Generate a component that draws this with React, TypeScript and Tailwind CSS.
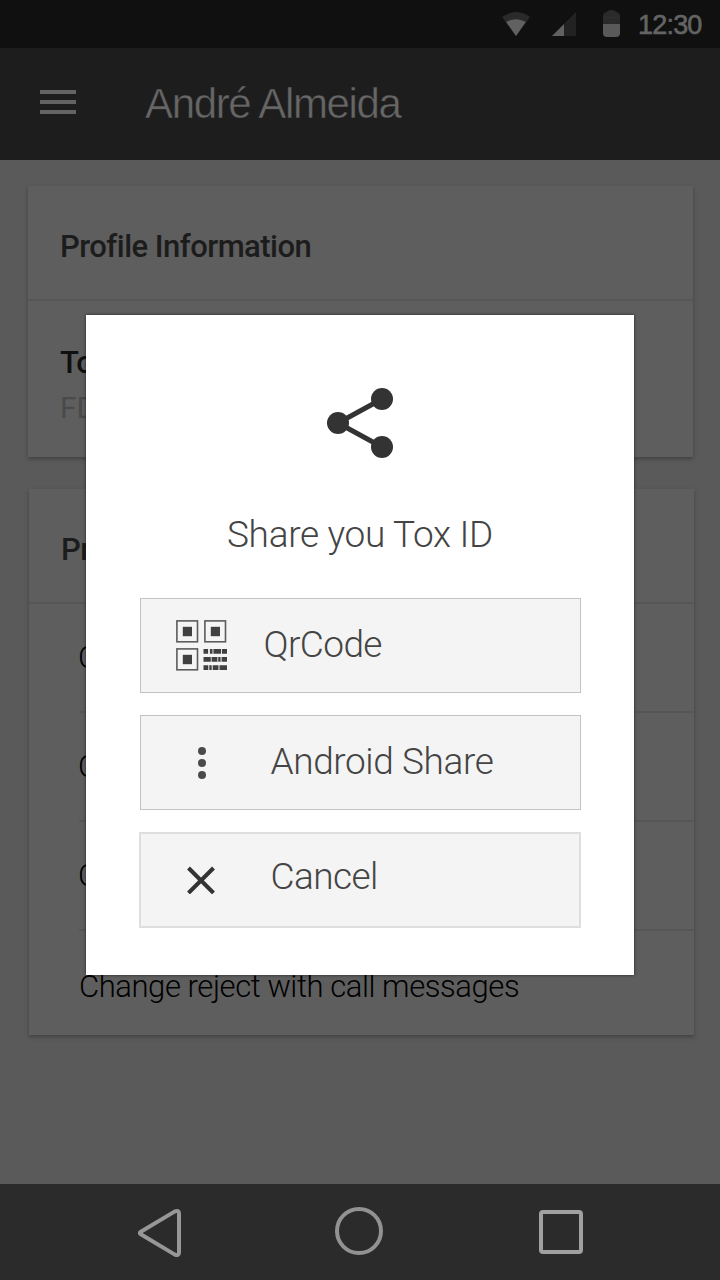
import type { ReactNode } from "react";

const ROBOTO = "font-['Roboto',sans-serif]";
const LIBERATION = "font-['Liberation_Sans',sans-serif]";

function StatusBar() {
  return (
    <div className="flex h-12 items-start bg-[#101010] pl-[502px]">
      <svg className="mt-3 h-6 w-7" viewBox="0 0 28 24">
        <path d="M0 5Q14 -5 28 5L14 24Z" fill="#2a2a2a" />
        <path d="M4.2 10Q14 4.5 23.8 10L14 24Z" fill="#616161" />
      </svg>
      <svg className="ml-[22px] mt-3 h-6 w-6" viewBox="0 0 24 24">
        <path d="M24 0V24H12V12Z" fill="#222" />
        <path d="M12 12V24H0Z" fill="#616161" />
      </svg>
      <svg className="ml-[27px] mt-[10px] h-[27px] w-[17px]" viewBox="0 0 17 27">
        <path d="M0 14V6Q0 3 3 2.2Q5 0 8.5 0Q12 0 14 2.2Q17 3 17 6V14Z" fill="#2a2a2a" />
        <path d="M0 7.4H17" stroke="#333" strokeWidth="0.8" />
        <path d="M0 14H17V23Q17 27 13 27H4Q0 27 0 23Z" fill="#595959" />
      </svg>
      <span className={`${LIBERATION} ml-[18px] mt-[9px] text-[27px] leading-8 tracking-[-0.8px] text-[#646464] [-webkit-text-stroke:0.6px_#646464]`}>
        12:30
      </span>
    </div>
  );
}

function AppBar() {
  return (
    <header className="flex h-28 items-start bg-[#1d1d1d] pl-10">
      <div className="mt-[42px] flex w-9 flex-col gap-[6px]">
        <div className="h-1 bg-[#636363]" />
        <div className="h-1 bg-[#636363]" />
        <div className="h-1 bg-[#636363]" />
      </div>
      <h1 className={`${LIBERATION} ml-[69px] mt-8 whitespace-nowrap text-[42px] leading-[48px] tracking-[-1.35px] text-[#666] [-webkit-text-stroke:0.5px_#1d1d1d]`}>
        André Almeida
      </h1>
    </header>
  );
}

const ROW = "ml-[50px] text-[31px] font-light leading-10 tracking-[-0.43px] text-black";
const ROW_LINE = "border-t-2 border-[#565656]";
const CARD = "w-[665px] bg-[#5e5e5e] shadow-[0_2px_4px_rgba(0,0,0,0.28)]";
const CARD_TITLE =
  "h-[115px] border-b-2 border-[#565656] pl-8 pt-[41px] text-[31px] font-medium leading-10 tracking-[-0.53px] text-[#1c1c1c]";

function ProfilePage() {
  return (
    <main className={`${ROBOTO} h-[1024px] overflow-hidden bg-[#5a5a5a]`}>
      <section className={`${CARD} ml-7 mt-[26px] h-[271px]`}>
        <h2 className={CARD_TITLE}>Profile Information</h2>
        <p className="pl-8 pt-[42px] text-[31px] font-medium leading-10 tracking-[-0.5px] text-[#101010]">Tox ID</p>
        <p className="pl-8 pt-[5px] text-[30px] leading-10 text-[#4a4a4a]">FD</p>
      </section>
      <section className={`${CARD} ml-[29px] mt-8 h-[546px]`}>
        <h2 className={CARD_TITLE}>Privacy</h2>
        <div className={`${ROW} h-[107px] pt-[34px] -indent-px`}>Change</div>
        <div className={`${ROW} ${ROW_LINE} h-[109px] pt-[34px] -indent-px`}>Change</div>
        <div className={`${ROW} ${ROW_LINE} h-[109px] pt-[34px] -indent-px`}>Change</div>
        <div className={`${ROW} ${ROW_LINE} pt-[36px]`}>Change reject with call messages</div>
      </section>
    </main>
  );
}

function NavigationBar() {
  return (
    <nav className="flex h-24 items-start bg-[#2b2b2b] pl-[137px]">
      <svg className="mt-6 h-[50px] w-[45px]" viewBox="0 0 45 50" fill="none" stroke="#979797" strokeWidth="4" strokeLinejoin="round">
        <path d="M3.4 24Q2.2 25 3.4 26L37.5 46.4Q42 48.5 42 44.5V5.5Q42 1.5 37.5 3.6Z" />
      </svg>
      <svg className="ml-[153px] mt-[23px] h-12 w-12" viewBox="0 0 48 48" fill="none" stroke="#929292" strokeWidth="4">
        <circle cx="24" cy="24" r="22" />
      </svg>
      <div className="ml-[156px] mt-[26px] size-11 rounded-[4px] border-4 border-[#a0a0a0]" />
    </nav>
  );
}

function ShareIcon() {
  return (
    <svg className="h-[70px] w-[66px]" viewBox="0 0 66 70" fill="#333">
      <path d="M55 11L11 35L55 59" fill="none" stroke="#333" strokeWidth="5" />
      <circle cx="55" cy="11" r="11" />
      <circle cx="11" cy="35" r="11" />
      <circle cx="55" cy="59" r="11" />
    </svg>
  );
}

function QrIcon() {
  const finders = [
    [0, 0],
    [28, 0],
    [0, 28],
  ];
  return (
    <svg className="h-[51px] w-[51px]" viewBox="0 0 51 51">
      {finders.map(([x, y]) => (
        <g key={`${x}-${y}`}>
          <rect x={x + 0.9} y={y + 0.9} width="20.6" height="20.9" fill="none" stroke="#5c5c5c" strokeWidth="1.6" />
          <rect x={x + 6.8} y={y + 6.8} width="9.2" height="9.4" fill="#404040" />
        </g>
      ))}
      <g fill="none" stroke="#404040" strokeWidth="4.7">
        <path d="M27.5 31.3H51" strokeDasharray="4.6 1.8 2.6 0.9 7.6 0.9 5.2 9" />
        <path d="M27.5 39.4H51" strokeDasharray="7.3 0.8 5.8 0.8 2.4 1 5.4 9" />
        <path d="M27.5 47.7H51" strokeDasharray="4.8 1 2.4 1 5.8 1 7.7 9" />
      </g>
    </svg>
  );
}

function MoreIcon() {
  return (
    <svg className="h-8 w-2" viewBox="0 0 8 32" fill="#4a4a4a">
      <circle cx="4" cy="4" r="4" />
      <circle cx="4" cy="16" r="4" />
      <circle cx="4" cy="28" r="4" />
    </svg>
  );
}

function CloseIcon() {
  return (
    <svg className="mr-px h-7 w-7" viewBox="0 0 28 28" stroke="#333" strokeWidth="4">
      <path d="M1.5 2L26.5 27M26.5 2L1.5 27" />
    </svg>
  );
}

function DialogButton({ icon, label, className, labelClass }: { icon: ReactNode; label: string; className: string; labelClass: string }) {
  return (
    <button className={`flex shrink-0 items-center bg-[#f4f4f4] text-left ${className}`}>
      <span className="flex w-[122px] justify-center">{icon}</span>
      <span className={`whitespace-nowrap text-[37px] font-light leading-[44px] text-[#444] ${labelClass}`}>{label}</span>
    </button>
  );
}

function ShareDialog() {
  return (
    <div
      role="dialog"
      className={`${ROBOTO} absolute left-[86px] top-[315px] flex h-[660px] w-[548px] flex-col items-center bg-white pt-[73px] shadow-[0_0_3px_rgba(0,0,0,0.6)]`}
    >
      <ShareIcon />
      <h2 className="mt-[55px] whitespace-nowrap text-[37px] font-light leading-[44px] tracking-[-0.3px] text-[#444]">Share you Tox ID</h2>
      <div className="mt-[41px] flex w-[441px] flex-col">
        <DialogButton icon={<QrIcon />} label="QrCode" className="h-[95px] border border-[#c3c3c3]" labelClass="pb-[2px] pl-px tracking-[-0.6px]" />
        <DialogButton icon={<MoreIcon />} label="Android Share" className="mt-[22px] h-[95px] border border-[#c3c3c3]" labelClass="pb-[2px] pl-[8px] tracking-[-0.4px]" />
        <DialogButton icon={<CloseIcon />} label="Cancel" className="-ml-px mt-[22px] h-24 border-2 border-[#dedede]" labelClass="pb-[6px] pl-[8px] tracking-[-0.6px]" />
      </div>
    </div>
  );
}

export default function App() {
  return (
    <div className="relative h-[1280px] w-[720px] overflow-hidden">
      <StatusBar />
      <AppBar />
      <ProfilePage />
      <NavigationBar />
      <ShareDialog />
    </div>
  );
}
